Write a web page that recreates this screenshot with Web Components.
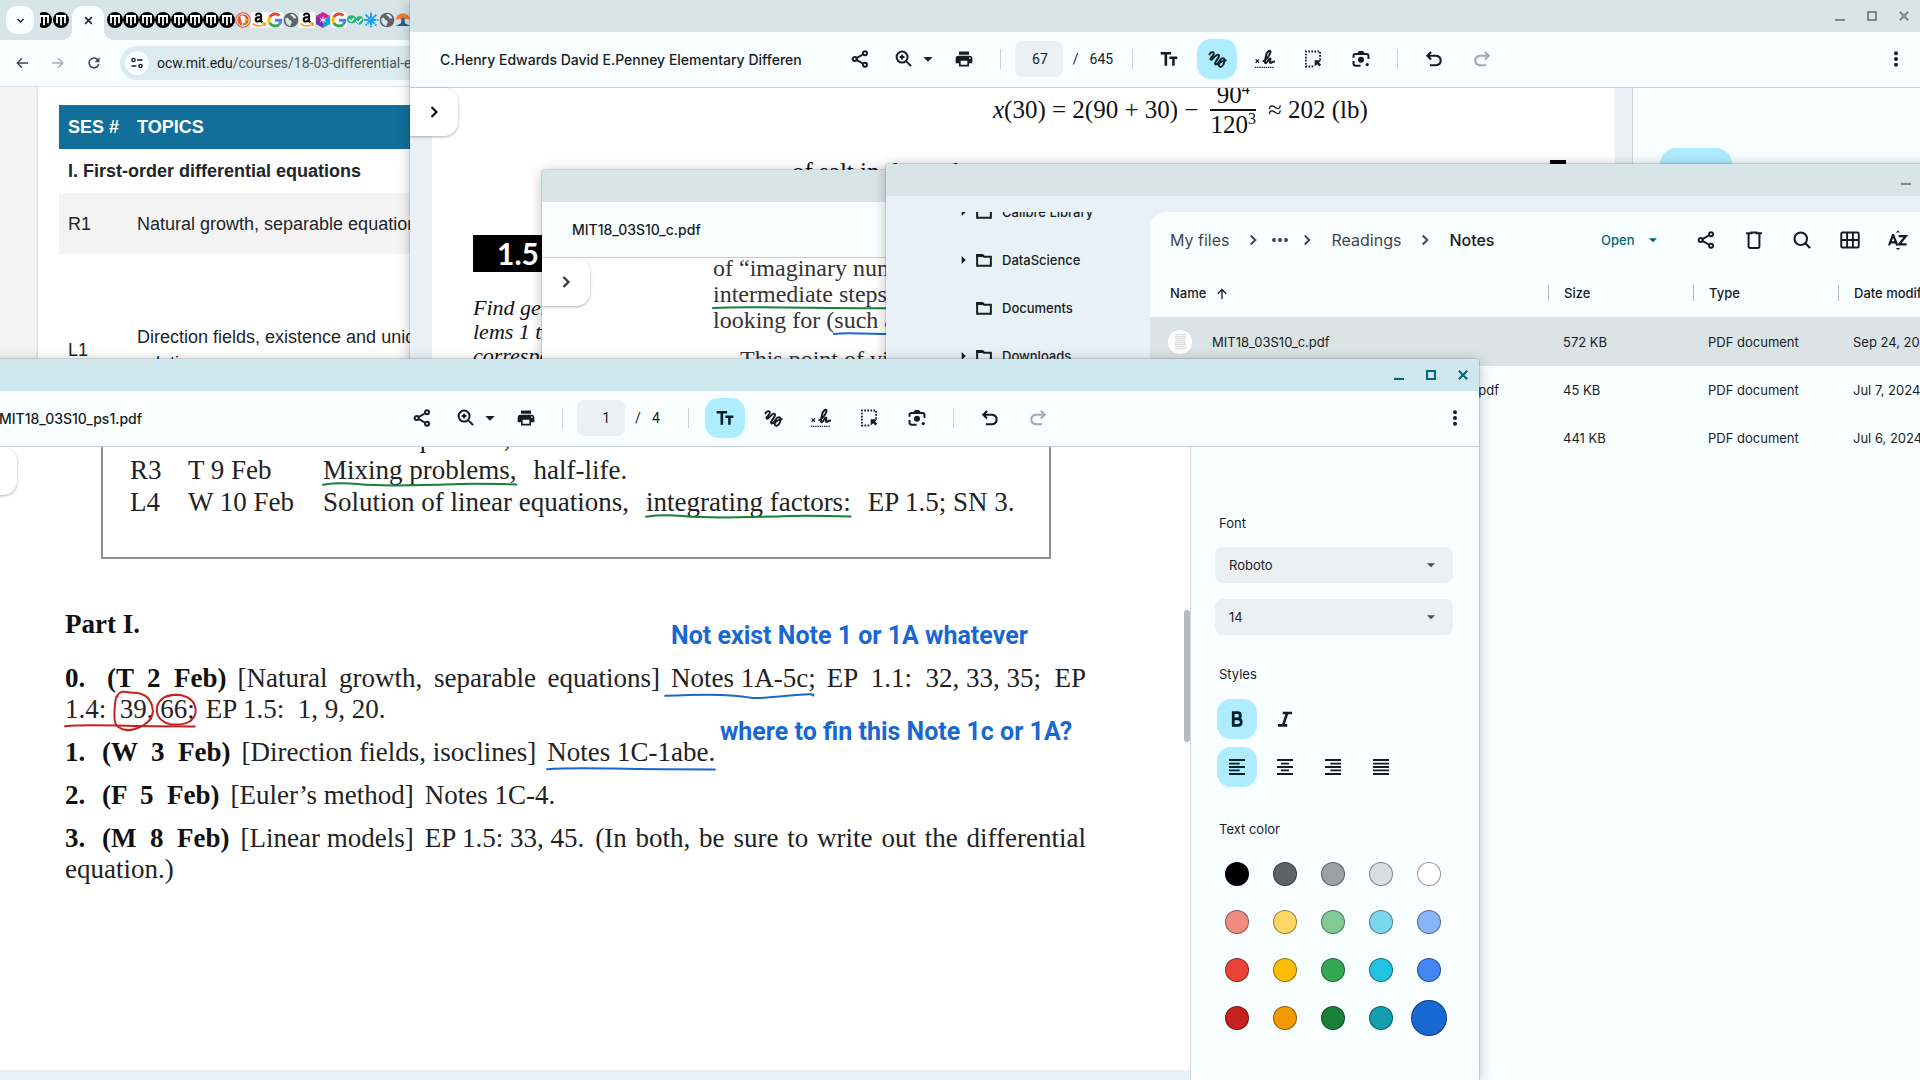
<!DOCTYPE html>
<html lang="en">
<head>
<meta charset="utf-8">
<title>Desktop</title>
<style>
html,body{margin:0;height:100%;overflow:hidden;background:#f8fdff}
</style>
</head>
<body>
<desk-top></desk-top>
<script>
const define=(name,html,setup)=>{
  const t=document.createElement('template');t.innerHTML=html;
  customElements.define(name,class extends HTMLElement{
    connectedCallback(){
      if(this.shadowRoot)return;
      const r=this.attachShadow({mode:'open'});
      const c=t.content.cloneNode(true);
      if(setup)setup(this,c);
      r.append(c);
    }
  });
};

const ICONS={
 share:'<g fill="none" stroke="currentColor" stroke-width="2.4"><circle cx="18" cy="5" r="2.4"/><circle cx="5.6" cy="12" r="2.4"/><circle cx="18" cy="19" r="2.4"/><path d="M7.8 10.9 15.8 6.3M7.8 13.1 15.8 17.7"/></g>',
 zoom:'<g fill="none" stroke="currentColor" stroke-width="2.4"><circle cx="9.7" cy="9.7" r="6.6"/><path d="M14.5 14.5 20.5 20.5M9.7 6.8v5.800M6.8 9.7h5.8"/></g>',
 caret:'<path d="M5 9h14l-7 7z"/>',
 print:'<path d="M19 8H5c-1.660 0-3 1.340-3 3v6h4v4h12v-4h4v-6c0-1.660-1.340-3-3-3zm-3 11H8v-5h8v5zm3-7c-.550 0-1-.450-1-1s.450-1 1-1 1 .450 1 1-.450 1-1 1zm-1-9H6v4h12V3z"/>',
 size:'<path d="M2 3.500h12.500v3.200H9.800V20H6.600V6.700H2zM12.500 9H22v3h-3.200v8h-3v-8h-3.300z"/>',
 ink:'<path fill="none" stroke="currentColor" stroke-width="2.300" stroke-linecap="round" d="M3 6.500C4.500 2.500 9.500 3 7.800 6.800S2.800 11 4.600 12.700 10.500 6 13.300 6.800 13 11.500 10.800 14.800 9.600 19.500 12.200 17.800 15.800 11 18.800 11 21.200 15 20 18 15.200 22.500 14.200 19.800 17.500 14 22.500 13.600"/>',
 sign:'<g fill="none" stroke="currentColor"><path stroke-width="2.400" stroke-linecap="round" d="M10 14.500c4-1.500 9-8.500 8.500-11.500-.5-2.500-4.200 0-5.200 5-1 4.500-2.100 9-.3 9 2 0 3-5.500 5-5.500 1.500 0-1.200 5.200.6 5.200 1.200 0 2.400-1.500 4.400-1.700"/><path stroke-width="1.500" d="m.8 12.500 4 4m0-4-4 4"/><path stroke-width="1.600" stroke-dasharray="1.600 1" d="M0 22h23.500"/></g>',
 select:'<path fill="none" stroke="currentColor" stroke-width="2.200" stroke-dasharray="2 1.700" d="M20.500 13V3h-17v18H14"/><path d="M14 13.500h8l-2.800 2.600 2.600 2.800-2 2-2.800-2.700L14 21z"/>',
 lens:'<g fill="none" stroke="currentColor" stroke-width="2.400"><path d="M3 10.500V8.500q0-2.500 2.500-2.500h13q2.500 0 2.500 2.500V12M3 14.500v3q0 2.500 2.500 2.500h6"/></g><path d="M7.500 5.500 9.500 2.500h5l2 3z"/><circle cx="12" cy="13" r="3.600"/><circle cx="19.500" cy="18.700" r="1.900"/>',
 undo:'<path fill="none" stroke="currentColor" stroke-width="2.500" d="M7 19.500H14.500q5.500-.500 5.500-5.700T14.500 8H4M8.500 3.500 4 8 8.500 12.500"/>',
 redo:'<path fill="none" stroke="currentColor" stroke-width="2.500" d="M17 19.500H9.500q-5.500-.500-5.500-5.700T9.500 8H20M15.500 3.500 20 8 15.500 12.500"/>',
 more:'<circle cx="12" cy="5" r="2.400"/><circle cx="12" cy="12" r="2.400"/><circle cx="12" cy="19" r="2.400"/>',
 dots:'<circle cx="3" cy="12" r="3"/><circle cx="12" cy="12" r="3"/><circle cx="21" cy="12" r="3"/>',
 right:'<path fill="none" stroke="currentColor" stroke-width="2.600" d="m9 6 6 6-6 6"/>',
 down:'<path fill="none" stroke="currentColor" stroke-width="4" d="m4 8 8 8 8-8"/>',
 tri:'<path d="M8 5v14l7-7z"/>',
 folder:'<path fill="none" stroke="currentColor" stroke-width="3" d="M1.700 20.500V4.500h7.500l2.500 2.800h10.600v13.200z"/><path d="M.5 3h10l3.500 4.500H.5z"/>',
 up:'<path fill="none" stroke="currentColor" stroke-width="2.600" d="M12 22V3M3.500 11.500 12 3l8.500 8.500"/>',
 trash:'<path fill="none" stroke="currentColor" stroke-width="2.400" d="M5.500 5v14.500q0 2 2 2h9q2 0 2-2V5M2.500 4H9V3h6v1h6.500"/>',
 search:'<g fill="none" stroke="currentColor" stroke-width="2.500"><circle cx="10.500" cy="10.500" r="7.500"/><path d="m15.700 15.700 6 6"/></g>',
 grid:'<path fill="none" stroke="currentColor" stroke-width="2.300" d="M1.500 4.500Q1.500 3 3 3h18q1.500 0 1.500 1.500v15q0 1.500-1.500 1.500H3q-1.500 0-1.500-1.500zM2 12h20M8.500 3v18M15.500 3v18"/>',
 min:'<path fill="none" stroke="currentColor" stroke-width="5" d="M0 21.500h24"/>',
 max:'<path fill="none" stroke="currentColor" stroke-width="5" d="M2.500 2.500h19v19h-19z"/>',
 close:'<path fill="none" stroke="currentColor" stroke-width="5" d="m2 2 20 20M22 2 2 22"/>',
 x:'<path fill="none" stroke="currentColor" stroke-width="4" d="m3 3 18 18M21 3 3 21"/>',
 back:'<path fill="none" stroke="currentColor" stroke-width="2.800" d="M24 12H2.500M12 2.500 2.500 12l9.500 9.500"/>',
 fwd:'<path fill="none" stroke="currentColor" stroke-width="2.800" d="M0 12h21.500M12 2.500l9.500 9.500-9.500 9.500"/>',
 reload:'<path fill="none" stroke="currentColor" stroke-width="3" d="M19.500 5.500A9.800 9.800 0 1 0 21.500 14"/><path d="M23 .5V10.500H13z"/>',
 tune:'<g fill="none" stroke="currentColor" stroke-width="2.800"><circle cx="5" cy="6" r="3.200"/><path d="M12 6h11M1 18h10"/><circle cx="19" cy="18" r="3.200"/></g>',
 bold:'<path fill="none" stroke="currentColor" stroke-width="3.700" d="M7 3.500h5.800q3.700 0 3.700 4.100t-3.700 4.100H7h6.500q4.200 0 4.200 4.400t-4.200 4.400H7z"/>',
 italic:'<path fill="none" stroke="currentColor" stroke-width="3.400" d="M9 4h12.500M2.500 20.500h12.500M15 4 9.300 20.500"/>',
 left:'<path fill="none" stroke="currentColor" stroke-width="2.800" d="M0 1.500h24M0 7h16M0 12h24M0 17h16M0 22.500h24"/>',
 center:'<path fill="none" stroke="currentColor" stroke-width="2.800" d="M0 1.500h24M6 7h12M0 12h24M6 17h12M0 22.500h24"/>',
 rightal:'<path fill="none" stroke="currentColor" stroke-width="2.800" d="M0 1.500h24M8 7h16M0 12h24M8 17h16M0 22.500h24"/>',
 full:'<path fill="none" stroke="currentColor" stroke-width="2.800" d="M0 1.500h24M0 7h24M0 12h24M0 17h24M0 22.500h24"/>',
 sort:'<path fill="none" stroke="currentColor" stroke-width="2.700" d="M1.200 18.500 5.900 6h.4L11 18.500M3 14.700h6.400M12.800 7.200h8.700L13.300 17.300h9"/><path d="M9.500 3 12 .5 14.500 3zM9.500 21.500h5L12 24z"/>',
 mit:'<circle cx="12" cy="12" r="12" fill="#000"/><path stroke="#fff" stroke-width="2.700" fill="none" d="M4.500 6h15M6 5v12M12 5v15M18 5v12"/>',
 duck:'<circle cx="12" cy="12" r="11.500" fill="#de5833"/><circle cx="12" cy="12" r="9.300" fill="none" stroke="#fff" stroke-width="1.500"/><path fill="#fff" d="M8 6c4-2 8 0 8 5l-1 9h-4z"/><path fill="#fdd20a" d="m13 11 6-1-1 3h-5z"/><path fill="#65bc46" d="m11 16 6 0-1 4h-4z"/>',
 amazon:'<rect width="24" height="24" fill="#fff"/><g fill="none" stroke="#000" stroke-width="3.200"><path d="M7.500 5.500C8 1.500 15 1 15 5.500v8l2 2M15 7.500c-5 0-8 1-8 4 0 4 7 3.500 8-1"/></g><path fill="none" stroke="#f90" stroke-width="2.300" d="M2 17.500q10 7 19 .5m-4-1h4v4"/>',
 google:'<rect width="24" height="24" rx="5" fill="#fff"/><g fill="none" stroke-width="4.400"><path stroke="#ea4335" d="M18.500 5.500A9 9 0 0 0 4.200 7.500"/><path stroke="#fbbc05" d="M4.200 7.500a9 9 0 0 0 0 9"/><path stroke="#34a853" d="M4.200 16.500A9 9 0 0 0 18 18.800"/><path stroke="#4285f4" d="M18 18.800q3-2.500 2.900-6.300H12"/></g>',
 globe:'<circle cx="12" cy="12" r="11" fill="#5f6368"/><path fill="#d6e4e8" d="M4 9c3-1 4 0 5 2s4 1 4 4-2 3-2 6c-5-1-9-6-7-12zM12 3c4 0 7 3 8 6-3 2-5 1-5-1s-3-1-4-3z"/>',
 cube:'<path fill="#d6219c" d="m12 0 10.500 6L12 12 1.500 6z"/><path fill="#7b2fa8" d="M1.500 6 12 12v12L1.500 18z"/><path fill="#12a4c8" d="M22.500 6 12 12v12l10.500-6z"/><path stroke="#fff" stroke-width="1.500" fill="none" d="M12 7v9m-4-6 8 4m0-4-8 4"/>',
 checks:'<path fill="#27b47e" d="M7 5q5 0 7 4 2-3 5-3 5 0 5 6t-5 7q-4 0-6-4-2 2-6 2-7 0-7-6t7-6z"/><path fill="none" stroke="#fff" stroke-width="2" d="m3 11 3 3 5-5m3 4 3 3 5-6"/>',
 snow:'<path fill="none" stroke="#18a0f0" stroke-width="3" stroke-dasharray="9 1" d="M12 1v22M1 12h22M4 4l16 16M20 4 4 20"/>',
 tree:'<path fill="#f08030" d="M1 12q1-9 11-10 10 1 11 10-6-3-11 0-5-3-11 0z"/><path fill="#2b5d8c" d="M10 9h4l1 8 8 4H1l8-4z"/>'
};
define('ui-icon','<style>:host{display:inline-flex;width:20px;height:20px;flex:none}svg{width:100%;height:100%;fill:currentColor}</style><svg viewBox="0 0 24 24" aria-hidden="true"></svg>',
 (el,c)=>{c.querySelector('svg').innerHTML=ICONS[el.getAttribute('name')]});

/* window frame: caption bar plus body */
define('desk-window',`<style>
:host{display:flex;flex-direction:column;position:absolute;box-sizing:border-box;background:#f8fdff;border-radius:2px 2px 0 0;box-shadow:0 0 0 1px #0000001c,0 2px 14px #00000040;font:14px Roboto,"Noto Sans",sans-serif;color:#171d1e}
header{flex:none;height:32px;display:flex;justify-content:flex-end;background:#d7e4e8;color:#7e898c;border-radius:2px 2px 0 0}
:host([active]) header{background:#cfe7ee;color:#006878}
button{all:unset;width:32px;display:flex;align-items:center;justify-content:center}
ui-icon{width:10px;height:10px}
main{flex:1;min-height:0;display:flex;flex-direction:column;overflow:hidden}
</style><header><button aria-label="Minimize"><ui-icon name="min"></ui-icon></button><button aria-label="Maximize"><ui-icon name="max"></ui-icon></button><button aria-label="Close"><ui-icon name="close"></ui-icon></button></header><main><slot></slot></main>`);

define('pdf-toolbar',`<style>
:host{display:flex;flex:none;align-items:center;height:54px;padding:0 14px 1px 30px;border-bottom:1px solid #c3d0d4;background:#f8fdff;overflow:hidden}
h1{margin:0;flex:1 1 0;font:500 14px Inter,Roboto,sans-serif;white-space:nowrap}
.controls{display:flex;align-items:center;flex:none}
button{all:unset;display:flex;align-items:center;justify-content:center;width:32px;height:40px;flex:none}
.caret{width:16px}.caret ui-icon{width:16px;height:16px}
.zoom,.print{margin-left:12px}
i{width:1px;height:20px;background:#c9d4d7;flex:none}
.d1{margin:0 14px 0 20px}.d2{margin:0 16px 0 19px}.d3{margin:0 16px}
input{width:48px;height:36px;box-sizing:border-box;border:0;border-radius:8px;background:#ecf0f3;text-align:right;padding:0 15px 0 0;font:14px Roboto;color:#171d1e}
.slash{margin:0 11px 0 10px}.total{min-width:17px}
.tools{display:flex;gap:8px}
.tools button{width:40px;border-radius:14px}
.tools button[aria-pressed=true]{background:#aeecff;color:#001f26}
[disabled]{color:#a4abad}
.end{flex:1 1 0;display:flex;justify-content:flex-end}
.more{width:20px}
</style><h1></h1><div class="controls">
<button aria-label="Share"><ui-icon name="share"></ui-icon></button>
<button class="zoom" aria-label="Zoom"><ui-icon name="zoom"></ui-icon></button><button class="caret" aria-label="Zoom level"><ui-icon name="caret"></ui-icon></button>
<button class="print" aria-label="Print"><ui-icon name="print"></ui-icon></button><i class="d1"></i>
<input aria-label="Page"><span class="slash">/</span><span class="total"></span><i class="d2"></i>
<div class="tools"><button aria-label="Text"><ui-icon name="size"></ui-icon></button><button aria-label="Draw"><ui-icon name="ink"></ui-icon></button><button aria-label="Sign"><ui-icon name="sign"></ui-icon></button><button aria-label="Select"><ui-icon name="select"></ui-icon></button><button aria-label="Lens"><ui-icon name="lens"></ui-icon></button></div><i class="d3"></i>
<div class="tools"><button aria-label="Undo"><ui-icon name="undo"></ui-icon></button><button aria-label="Redo" disabled><ui-icon name="redo"></ui-icon></button></div></div>
<div class="end"><button class="more" aria-label="More"><ui-icon name="more"></ui-icon></button></div>`,
(el,c)=>{
  c.querySelector('h1').textContent=el.getAttribute('name');
  c.querySelector('input').setAttribute('value',el.getAttribute('page')||'');
  c.querySelector('.total').textContent=el.getAttribute('total')||'';
  const on=el.getAttribute('tool');
  if(on)c.querySelector(`[aria-label=${on}]`).setAttribute('aria-pressed','true');
});

define('side-handle',`<style>:host{display:block;position:absolute;left:0;top:0}
button{all:unset;display:flex;align-items:center;justify-content:center;width:48px;height:48px;background:#fff;border-radius:0 14px 14px 0;box-shadow:0 1px 3px #00000050}</style>
<button aria-label="Open sidebar"><ui-icon name="right"></ui-icon></button>`);

/* hand-drawn stroke laid over the words it marks */
const STROKES={
 wave:'M0 96Q8 88 18 94T45 98T70 94T100 95',
 dip:'M-4 106Q25 100 38 104T55 112T80 106T98 105',
 flat:'M0 104Q12 99 40 102T100 105',
 ring:'M-12 10C-2 -14 20 -8 45 -4Q115 -6 122 55Q120 90 70 108T-6 106Q-24 100 -20 50T-8 6',
 ring2:'M60 4Q8 -4 -8 38Q-16 84 30 98Q95 104 103 60Q106 16 62 4Q40 0 20 8'
};
define('ink-mark',`<style>:host{display:inline-block;position:relative;white-space:pre}svg{position:absolute;left:0;top:0;width:100%;height:100%;overflow:visible}path{fill:none;stroke-width:2;stroke-linecap:round;vector-effect:non-scaling-stroke}</style><slot></slot><svg viewBox="0 0 100 100" preserveAspectRatio="none"><path/></svg>`,
(el,c)=>{const p=c.querySelector('path');p.setAttribute('d',STROKES[el.getAttribute('shape')]);p.setAttribute('stroke',el.getAttribute('ink'))});

define('browser-window',`<style>
:host{display:flex;flex-direction:column;position:absolute;inset:0 1200px 0 0;background:#fff;font:18px "Liberation Sans",Arial,sans-serif;color:#212529}
.tabs{flex:none;height:40px;background:#d6e4e8;display:flex;align-items:center;padding-left:6px;box-sizing:border-box}
button{all:unset;display:flex;align-items:center;justify-content:center}
.find{width:28px;height:28px;border-radius:10px;background:#f8fdff;margin-right:6px}
.find ui-icon{width:9px;height:9px}
.fav{width:16px;height:16px;margin-right:0}
.cut{width:12px;overflow:hidden;display:flex;justify-content:flex-end}
.cut+ui-icon{margin-left:1px}
.active{width:32px;height:34px;align-self:flex-end;border-radius:10px 10px 0 0;background:#f8fdff;display:flex;margin:0 3px;position:relative;justify-content:center;align-items:center}
.active ui-icon{padding-bottom:6px}
.active:before,.active:after{content:"";position:absolute;bottom:0;width:10px;height:10px}
.active:before{right:100%;background:radial-gradient(circle at 0 0,transparent 10px,#f8fdff 0)}
.active:after{left:100%;background:radial-gradient(circle at 100% 0,transparent 10px,#f8fdff 0)}
.active ui-icon{width:9px;height:9px}
.bar{flex:none;height:46px;border-bottom:1px solid #d6e4e8;background:#f8fdff;display:flex;align-items:center;color:#3c4b4f}
.bar button{width:36px;height:36px}.bar button ui-icon{width:12px;height:12px}
.nav{display:flex;padding:0 8px 0 4px}
.off{color:#a6b0b2}
.url{flex:1;height:34px;border-radius:17px 0 0 17px;background:#dcebef;display:flex;align-items:center;padding-left:5px;font:14px Roboto,sans-serif;color:#4b5658;white-space:nowrap}
.url b{font-weight:400;color:#171d1e}
.url .site{width:24px;height:24px;border-radius:12px;background:#f8fdff;margin-right:8px;color:#171d1e}
.url .site ui-icon{width:12px;height:12px}
.view{flex:1;background:#f4f4f4;padding-left:38px;min-height:0;overflow:hidden;display:flex}
.sheet{flex:1;background:#fff;box-shadow:0 0 3px #0003;padding:18px 0 0 21px}
table{width:100%;border-collapse:collapse;table-layout:fixed}
th,td{text-align:left;padding:0 9px;height:44px;line-height:26px;white-space:nowrap}
thead{background:#126f9a;color:#fff}
.r{background:#f4f4f4}.r td{height:61px}.tall td{height:192px}
</style>
<div class="tabs"><button class="find" aria-label="Search tabs"><ui-icon name="down"></ui-icon></button><span class="cut"><ui-icon class="fav" name="mit"></ui-icon></span><ui-icon class="fav" name="mit"></ui-icon><div class="active"><ui-icon name="x"></ui-icon></div></div>
<div class="bar"><div class="nav"><button aria-label="Back"><ui-icon name="back"></ui-icon></button><button class="off" aria-label="Forward"><ui-icon name="fwd"></ui-icon></button><button aria-label="Reload"><ui-icon name="reload"></ui-icon></button></div><div class="url"><button class="site" aria-label="Site information"><ui-icon name="tune"></ui-icon></button><span><b>ocw.mit.edu</b>/courses/18-03-differential-equations</span></div></div>
<div class="view"><div class="sheet"><table><colgroup><col style="width:69px"><col></colgroup>
<thead><tr><th>SES #</th><th>TOPICS</th></tr></thead>
<tbody><tr><th colspan="2">I. First-order differential equations</th></tr>
<tr class="r"><td>R1</td><td>Natural growth, separable equations</td></tr>
<tr class="tall"><td>L1</td><td>Direction fields, existence and uniqueness of<br>solutions</td></tr></tbody></table></div></div>`,
(el,c)=>{const t=c.querySelector('.tabs');
 'mit mit mit mit mit mit mit mit duck amazon google globe amazon cube google checks snow globe tree'.split(' ').forEach(n=>{const i=document.createElement('ui-icon');i.className='fav';i.setAttribute('name',n);t.append(i)})});

define('book-view',`<style>
:host{display:flex;flex:1;min-height:0;position:relative;background:#e9f1f7;font:25px "Liberation Serif",serif;color:#111}
.page{flex:1;margin:0 17px 0 22px;background:#fff;overflow:hidden}
.math{display:flex;align-items:center;justify-content:flex-start;height:56px;padding-left:561px;gap:12px;margin-top:-6px;white-space:pre}
.frac{display:flex;flex-direction:column;text-align:center}
.frac span{line-height:28px}.frac span+span{border-top:2px solid #111}
sup{font-size:16px;line-height:0}
p{margin:0}
.salt{padding:20px 0 0 360px;line-height:28px;height:28px}
.sec{display:flex;margin:49px 0 0 41px;width:90px;height:37px;background:#000;color:#fff;font:bold 30px/37px Lato,"Open Sans",sans-serif;justify-content:center;align-items:center}
.find{margin:24px 0 0 41px;font-style:italic;font-size:22px;line-height:24px;width:90px;white-space:nowrap}
aside{width:287px;border-left:1px solid #cfd8dc;background:#f8fdff}
button{all:unset;display:block;margin:60px 0 0 27px;width:72px;height:72px;border-radius:16px;background:#aeecff}
.end{position:absolute;left:1140px;top:72px;width:16px;height:16px;background:#000}
</style><div class="page"><div class="math"><span><i>x</i>(30) = 2(90 + 30) −</span><span class="frac"><span>90<sup>4</sup></span><span>120<sup>3</sup></span></span><span>≈ 202 (lb)</span></div>
<p class="salt">of salt in the tank</p><div class="sec">1.5</div><p class="find">Find general<br>lems 1 through<br>corresponding</p></div><span class="end"></span>
<aside><button aria-label="Pen"></button></aside><side-handle></side-handle>`);

define('notes-view',`<style>
:host{display:block;flex:1;min-height:0;position:relative;background:#fff;font:24px/26px "Liberation Serif",serif;color:#333;overflow:hidden}
p{margin:-3px 0 0 171px;width:300px;white-space:nowrap}p+p{margin:13px 0 0 198px}
</style><p>of “imaginary numbers”<br><ink-mark shape="flat" ink="#188038">intermediate steps</ink-mark><br>looking for (<ink-mark shape="flat" ink="#1967d2">such as</ink-mark></p><p>This point of view</p><side-handle></side-handle>`);

define('files-view',`<style>
:host{display:flex;flex:1;min-height:0;background:#e9f1f8;padding-top:16px;font:500 13px Inter,Roboto,sans-serif}
nav{width:264px;overflow:hidden}
ul{list-style:none;margin:-24px 0 0;padding:0}
li{height:48px;display:flex;align-items:center;padding-left:71px}
li ui-icon{width:16px;height:16px;margin-right:10px}
li ui-icon:first-child{width:14px;height:14px;margin-right:5px}
.none{visibility:hidden}
.pane{flex:1;background:#f8fdff;border-radius:16px 0 0 0;overflow:hidden}
.head{display:flex;align-items:center;height:55px;padding:0 0 1px 20px;color:#3f484b}
.crumbs{display:flex;align-items:center;font-size:16px;font-weight:400;width:431px}
.crumbs ui-icon{width:18px;height:18px;margin:0 15px}
.crumbs ui-icon[name=dots]{width:16px;height:16px;margin:0 -5px}
.crumbs b{font-weight:500;color:#171d1e}
.head button{all:unset;display:flex;align-items:center;color:#171d1e;width:20px;margin-right:28px}
.head button.open{color:#006878;width:auto;gap:12px;margin-right:36px;font-size:13px}
.open ui-icon{width:14px;height:14px}
table{width:100%;border-collapse:collapse;table-layout:fixed}
th,td{height:48px;padding:0 16px;text-align:left;font-weight:400;white-space:nowrap;overflow:hidden}
td+td{padding-left:15px}
th{font-weight:500;height:49px}
th span{display:block;border-left:2px solid #b5bcbe;margin-left:-17px;padding-left:15px;line-height:16px}
th:first-child,td:first-child{width:362px;padding-left:20px}
th:first-child{box-sizing:border-box;width:398px}
th:nth-child(2),th:nth-child(3){width:113px}
th:first-child ui-icon{width:12px;height:12px;margin-left:6px;vertical-align:middle}
.sel{background:#dbe3e5}
.sel td{height:49px}
.doc{display:flex;align-items:center;gap:20px}
.doc i{width:24px;height:24px;margin-left:-2px;border-radius:12px;background:#fff;display:flex;align-items:center;justify-content:center}
.doc i:before{content:"";width:11px;height:16px;background:repeating-linear-gradient(#ddd 0 1px,#f6f6f6 1px 2px)}
.tail{display:block;width:329px;text-align:right}
</style><nav><ul></ul></nav><div class="pane"><div class="head"><div class="crumbs"><span>My files</span><ui-icon name="right"></ui-icon><ui-icon name="dots"></ui-icon><ui-icon name="right"></ui-icon><span>Readings</span><ui-icon name="right"></ui-icon><b>Notes</b></div>
<button class="open">Open <ui-icon name="caret"></ui-icon></button><button aria-label="Share"><ui-icon name="share"></ui-icon></button><button aria-label="Delete"><ui-icon name="trash"></ui-icon></button><button aria-label="Search"><ui-icon name="search"></ui-icon></button><button aria-label="Grid"><ui-icon name="grid"></ui-icon></button><button aria-label="Sort"><ui-icon name="sort"></ui-icon></button></div>
<table><thead><tr><th>Name <ui-icon name="up"></ui-icon></th><th><span>Size</span></th><th><span>Type</span></th><th><span>Date modified</span></th></tr></thead>
<tbody><tr class="sel"><td><div class="doc"><i></i>MIT18_03S10_c.pdf</div></td><td>572 KB</td><td>PDF document</td><td>Sep 24, 2024</td></tr>
<tr><td><span class="tail">.pdf</span></td><td>45 KB</td><td>PDF document</td><td>Jul 7, 2024,</td></tr>
<tr><td></td><td>441 KB</td><td>PDF document</td><td>Jul 6, 2024,</td></tr></tbody></table></div>`,
(el,c)=>{c.querySelector('ul').innerHTML=[['Calibre Library',1],['DataScience',1],['Documents',0],['Downloads',1]].map(([n,k])=>`<li><ui-icon name="tri" class="${k?'':'none'}"></ui-icon><ui-icon name="folder"></ui-icon>${n}</li>`).join('')});

define('problem-set',`<style>
:host{display:block;flex:1;min-width:0;position:relative;background:#fff;margin-bottom:10px;font:27px/31px "Liberation Serif","Times New Roman",serif;color:#222;overflow:hidden}
.box{margin:-25px 139px 0 132px;border:2px solid #8e8e8e;border-top:0;padding:0 0 39px 27px}
.row{display:flex;line-height:32px;white-space:pre}
.row>:nth-child(1){width:58px}.row>:nth-child(2){width:135px}.row>:nth-child(n+4){margin-left:17px}
.text{padding:50px 104px 0 96px}
b{color:#111}
h2{font-size:27px;line-height:31px;margin:0 0 23px;color:#111}
.item{margin-bottom:12px}
.line{display:flex;gap:11px;white-space:pre}
.fill{flex:1;white-space:nowrap;text-align-last:justify}
.n{width:26px}.n0{width:31px}
.note{position:absolute;font:bold 25px/28px Roboto,sans-serif;color:#1967d2;white-space:nowrap}
.n-a{left:702px;top:175px}.n-b{left:751px;top:271px}
.bar{position:absolute;right:0;top:163px;width:6px;height:132px;border-radius:3px;background:#b5bcbe}
</style>
<div class="box"><div class="row"><span>L3</span><span>M 8 Feb</span><span>Linear equations, models:</span></div>
<div class="row"><span>R3</span><span>T 9 Feb</span><ink-mark shape="wave" ink="#188038">Mixing problems,</ink-mark><span>half-life.</span></div>
<div class="row"><span>L4</span><span>W 10 Feb</span><span>Solution of linear equations,</span><ink-mark shape="wave" ink="#188038">integrating factors:</ink-mark><span>EP 1.5; SN 3.</span></div></div>
<div class="text"><h2>Part I.</h2>
<div class="item"><div class="line"><b class="n0">0.</b><b>(T  2  Feb)</b><span class="fill">[Natural growth, separable equations]</span><ink-mark shape="dip" ink="#1967d2">Notes 1A-5c;</ink-mark><span>EP  1.1:  32, 33, 35;  EP</span></div>
<div class="line"><ink-mark shape="flat" ink="#c5221f">1.4:  <ink-mark shape="ring" ink="#c5221f">39</ink-mark>, <ink-mark shape="ring2" ink="#c5221f">66;</ink-mark></ink-mark><span>EP 1.5:  1, 9, 20.</span></div></div>
<div class="item line"><b class="n">1.</b><b>(W  3  Feb)</b><span>[Direction fields, isoclines]</span><ink-mark shape="flat" ink="#1967d2">Notes 1C-1abe.</ink-mark></div>
<div class="item line"><b class="n">2.</b><b>(F  5  Feb)</b><span>[Euler’s method]</span><span>Notes 1C-4.</span></div>
<div class="line"><b class="n">3.</b><b>(M  8  Feb)</b><span>[Linear models]</span><span>EP 1.5: 33, 45.</span><span class="fill">(In both, be sure to write out the differential</span></div><div class="line">equation.)</div></div>
<span class="note n-a">Not exist Note 1 or 1A whatever</span><span class="note n-b">where to fin this Note 1c or 1A?</span><span class="bar"></span>
<side-handle></side-handle>`);

define('text-panel',`<style>
:host{display:block;flex:0 0 286px;box-sizing:border-box;border-left:1px solid #cfd8dc;padding:66px 26px 0 24px;font:13px/20px Inter,Roboto,sans-serif;color:#171d1e;background:#f8fdff}
label,h3{display:block;font:inherit;margin:0 0 14px 4px}
.pick{position:relative;margin-bottom:16px}
select{appearance:none;width:100%;height:36px;border:0;border-radius:8px;background:#ecf0f3;padding:0 14px;font:13px Inter,Roboto,sans-serif;color:#171d1e;display:block}
.pick ui-icon{position:absolute;right:15px;top:11px;width:14px;height:14px;color:#3f5358}
h3{margin:29px 0 15px 4px}
.set{display:flex;gap:8px;margin:0 0 8px 2px}
.set button{all:unset;width:40px;height:40px;border-radius:14px;display:flex;align-items:center;justify-content:center}
.set button[aria-pressed=true]{background:#aeecff;color:#001f26}
.set ui-icon{width:18px;height:18px}.al ui-icon{width:16px;height:16px}
.al{margin-bottom:32px}
.colors{display:grid;grid-template-columns:repeat(5,48px);grid-auto-rows:48px;place-items:center;margin:-4px 0 0 -2px}
.colors input{appearance:none;margin:0;width:24px;height:24px;border-radius:50%;border:1px solid #0006}
.colors input:checked{width:36px;height:36px}
</style><label for="f">Font</label><div class="pick"><select id="f"><option>Roboto</option></select><ui-icon name="caret"></ui-icon></div>
<div class="pick"><select aria-label="Size"><option>14</option></select><ui-icon name="caret"></ui-icon></div>
<h3>Styles</h3><div class="set"><button aria-label="Bold" aria-pressed="true"><ui-icon name="bold"></ui-icon></button><button aria-label="Italic"><ui-icon name="italic"></ui-icon></button></div>
<div class="set al"><button aria-label="Align left" aria-pressed="true"><ui-icon name="left"></ui-icon></button><button aria-label="Align center"><ui-icon name="center"></ui-icon></button><button aria-label="Align right"><ui-icon name="rightal"></ui-icon></button><button aria-label="Justify"><ui-icon name="full"></ui-icon></button></div>
<h3>Text color</h3><div class="colors"></div>`,
(el,c)=>{c.querySelector('.colors').innerHTML='000000 5f6368 9aa0a6 dadce0 ffffff f28b82 fdd663 81c995 78d9ec 8ab4f8 ea4335 fbbc04 34a853 24c1e0 4285f4 c5221f f29900 188038 129eaf 1967d2'.split(' ').map((v,i)=>`<input type="radio" name="c" aria-label="#${v}" style="background:#${v}"${i==19?' checked':''}>`).join('')});

define('desk-top',`<style>
:host{display:block;position:relative;width:100vw;height:100vh;overflow:hidden}
.a{left:410px;right:0;top:0;bottom:0}
.b{left:542px;right:-60px;top:170px;bottom:0}
.f{left:886px;right:-66px;top:164px;bottom:0}
.p{left:-31px;right:441px;top:359px;bottom:0}
.cols{display:flex;flex:1;min-height:0;background:#e9f1f8}
</style><browser-window></browser-window>
<desk-window class="a"><pdf-toolbar name="C.Henry Edwards David E.Penney Elementary Differen" page="67" total="645" tool="Draw"></pdf-toolbar><book-view></book-view></desk-window>
<desk-window class="b"><pdf-toolbar name="MIT18_03S10_c.pdf" page="1" total="4"></pdf-toolbar><notes-view></notes-view></desk-window>
<desk-window class="f"><files-view></files-view></desk-window>
<desk-window class="p" active><pdf-toolbar name="MIT18_03S10_ps1.pdf" page="1" total="4" tool="Text"></pdf-toolbar><div class="cols"><problem-set></problem-set><text-panel></text-panel></div></desk-window>`);
</script>
</body>
</html>
